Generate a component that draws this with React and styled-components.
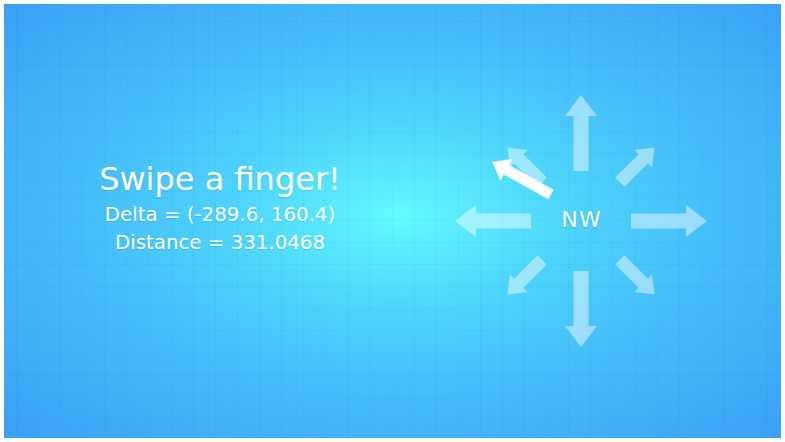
import React from "react";
import styled, { createGlobalStyle } from "styled-components";

const GlobalStyle = createGlobalStyle`
  html, body {
    margin: 0;
    padding: 0;
    background: #ffffff;
  }
  body {
    font-family: "DejaVu Sans", "Open Sans", sans-serif;
  }
`;

const swipe = { dx: -289.6, dy: 160.4, distance: "331.0468", label: "NW" };
// screen y grows downward, the swipe delta uses y up
const swipeAngle = (Math.atan2(-swipe.dy, swipe.dx) * 180) / Math.PI;

const Page = styled.div`
  padding: 4px;
  width: 785px;
  height: 442px;
  box-sizing: border-box;
`;

const Stage = styled.div`
  width: 777px;
  height: 434px;
  display: flex;
  align-items: center;
  background-color: #3a9ff6;
  background-image: linear-gradient(rgba(20, 70, 160, 0.055) 1px, transparent 1px),
    linear-gradient(90deg, rgba(20, 70, 160, 0.055) 1px, transparent 1px),
    radial-gradient(
      ellipse farthest-corner at 51% 49%,
      #64fcff 0%,
      #5cf0fe 8%,
      #4dd2fb 32%,
      #45bcf9 58%,
      #3a9ff6 100%
    );
  background-size: 22.1px 22.1px, 22.1px 22.1px, 100% 100%;
  background-position: 12px 17px, 12px 17px, 0 0;
  color: #ffffff;
  overflow: hidden;
`;

const Readout = styled.div`
  width: 300px;
  margin-left: 66px;
  margin-bottom: 26px;
  text-align: center;
  text-shadow: 0 1px 1px rgba(0, 70, 140, 0.15);
`;

const Title = styled.div`
  font-size: 32px;
  line-height: 38px;
  margin-bottom: 3px;
`;

const Stat = styled.div`
  font-size: 19.8px;
  line-height: 28px;
`;

const Compass = styled.div`
  width: 260px;
  height: 260px;
  margin-left: 81px;
  display: grid;
  place-items: center;

  & > * {
    grid-area: 1 / 1;
  }
`;

const Direction = styled.div`
  font-size: 22px;
  line-height: 1;
  letter-spacing: 1.5px;
  padding-left: 1.5px;
  padding-bottom: 2px;
  text-shadow: 0 1px 1px rgba(0, 60, 120, 0.3);
`;

const cardinal =
  "M -7.5 -50 L -7.5 -105 L -16 -105 L 0 -126 L 16 -105 L 7.5 -105 L 7.5 -50 Z";
const diagonal =
  "M -6.5 -55 L -6.5 -88 L -12.5 -88 L 0 -104 L 12.5 -88 L 6.5 -88 L 6.5 -55 Z";
const pointer =
  "M 0 -5.4 L 51 -5.4 L 51 -12.5 L 67 0 L 51 12.5 L 51 5.4 L 0 5.4 Z";

function CompassArrows() {
  return (
    <svg width="260" height="260" viewBox="0 0 260 260">
      <g transform="translate(130 130)" fill="#ffffff" fillOpacity="0.45">
        {[0, 90, 180, 270].map((a) => (
          <path key={a} d={cardinal} transform={`rotate(${a})`} />
        ))}
        {[45, 135, 225, 315].map((a) => (
          <path key={a} d={diagonal} transform={`rotate(${a})`} />
        ))}
      </g>
      <path
        d={pointer}
        fill="#ffffff"
        transform={`translate(${130 - 30} ${130 - 26.5}) rotate(${swipeAngle})`}
      />
    </svg>
  );
}

export default function App() {
  return (
    <>
      <GlobalStyle />
      <Page>
        <Stage>
          <Readout>
            <Title>Swipe a finger!</Title>
            <Stat>
              Delta = ({swipe.dx}, {swipe.dy})
            </Stat>
            <Stat>Distance = {swipe.distance}</Stat>
          </Readout>
          <Compass>
            <CompassArrows />
            <Direction>{swipe.label}</Direction>
          </Compass>
        </Stage>
      </Page>
    </>
  );
}
